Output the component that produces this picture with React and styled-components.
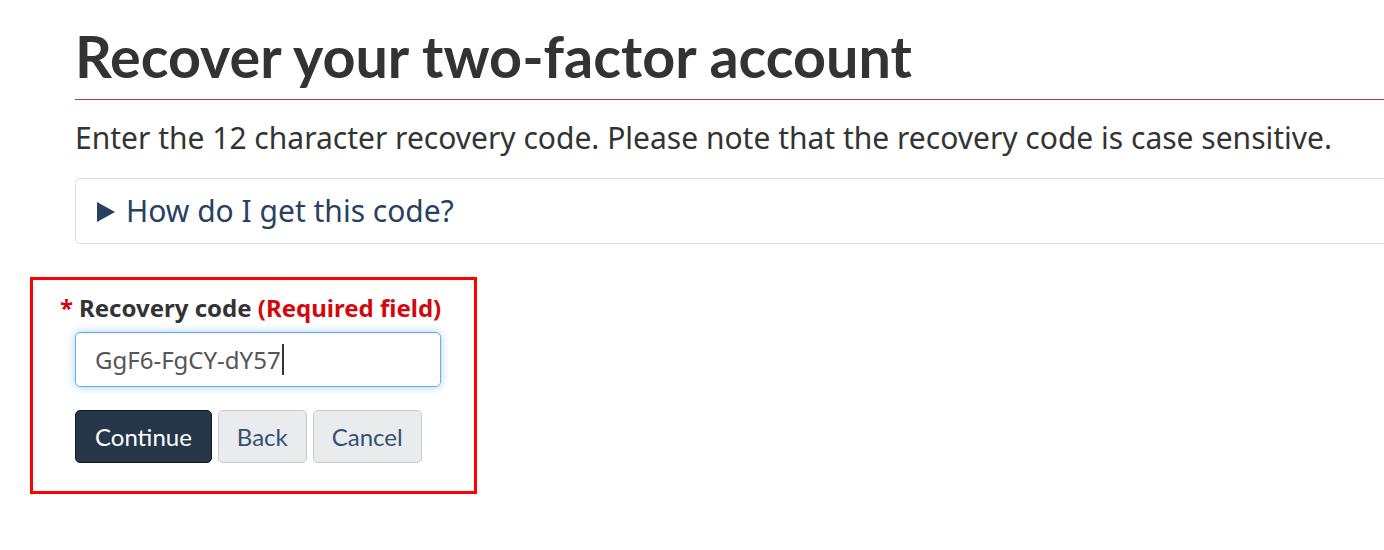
import React from "react";
import styled, { createGlobalStyle } from "styled-components";

const Global = createGlobalStyle`
  html, body { margin: 0; padding: 0; background: #fff; overflow: hidden; }
  body { font-family: "Noto Sans", sans-serif; color: #333; }
`;

const Page = styled.main`
  width: 1420px;
  padding-left: 75px;
  box-sizing: border-box;
`;

const Title = styled.h1`
  margin: 25px 0 0 0;
  padding: 0 0 12px 0;
  font-family: Lato, "Noto Sans", sans-serif;
  font-weight: 700;
  font-size: 57.5px;
  line-height: 62px;
  color: #333;
  border-bottom: 1px solid #af3c43;
`;

const Lead = styled.p`
  margin: 17px 0 0 0;
  font-size: 30px;
  line-height: 42px;
  color: #333;
`;

const Details = styled.details`
  margin-top: 19px;
  border: 1px solid #ddd;
  border-radius: 5px;
`;

const Summary = styled.summary`
  list-style: none;
  display: flex;
  align-items: center;
  gap: 11px;
  padding: 11px 21px;
  font-size: 30px;
  line-height: 42px;
  color: #284162;
  cursor: pointer;
  &::-webkit-details-marker { display: none; }
`;

const Arrow = styled.svg`
  width: 18px;
  height: 20px;
  flex: none;
  margin-top: 2px;
`;

const FormBox = styled.form`
  margin: 33px 0 0 -45px;
  width: 447px;
  box-sizing: border-box;
  border: 3px solid #f00;
  padding: 11px 0 28px 42px;
`;

const Label = styled.label`
  display: block;
  margin-left: -15px;
  font-size: 24px;
  line-height: 34px;
  font-weight: 700;
  color: #333;
`;

const Star = styled.span`
  color: #d3080c;
  margin-right: 6px;
`;

const Req = styled.strong`
  color: #d3080c;
  font-weight: 700;
`;

const Field = styled.div`
  margin-top: 7px;
  width: 366px;
  height: 55px;
  box-sizing: border-box;
  border: 1px solid #66afe9;
  border-radius: 5px;
  box-shadow: inset 0 1px 1px rgba(0,0,0,.075), 0 0 8px rgba(102,175,233,.6);
  padding: 0 19px;
  display: flex;
  align-items: center;
  font-size: 24px;
  color: #555;
`;

const Caret = styled.span`
  display: inline-block;
  width: 2px;
  height: 31px;
  background: #333;
  margin-left: 1px;
`;

const Buttons = styled.div`
  margin-top: 23px;
  display: flex;
  gap: 6px;
`;

const Button = styled.button`
  height: 53px;
  box-sizing: border-box;
  padding: 0 ${p => p.$pad}px;
  border-radius: 5px;
  font-family: Lato, "Noto Sans", sans-serif;
  font-size: 24px;
  line-height: 1;
  cursor: pointer;
  border: 1px solid ${p => (p.$primary ? "#091c2d" : "#c6c9ce")};
  background: ${p => (p.$primary ? "#26374a" : "#eaebed")};
  color: ${p => (p.$primary ? "#fff" : "#335075")};
`;

export default function App() {
  return (
    <>
      <Global />
      <Page>
        <Title>Recover your two-factor account</Title>
        <Lead>
          Enter the 12 character recovery code. Please note that the recovery
          code is case sensitive.
        </Lead>
        <Details>
          <Summary>
            <Arrow viewBox="0 0 18 20">
              <polygon points="0,0 18,10 0,20" fill="#284162" />
            </Arrow>
            How do I get this code?
          </Summary>
        </Details>
        <FormBox onSubmit={e => e.preventDefault()}>
          <Label>
            <Star>*</Star>Recovery code <Req>(Required field)</Req>
          </Label>
          <Field>
            GgF6-FgCY-dY57
            <Caret />
          </Field>
          <Buttons>
            <Button type="submit" $primary $pad={19}>Continue</Button>
            <Button type="button" $pad={18}>Back</Button>
            <Button type="button" $pad={18}>Cancel</Button>
          </Buttons>
        </FormBox>
      </Page>
    </>
  );
}
